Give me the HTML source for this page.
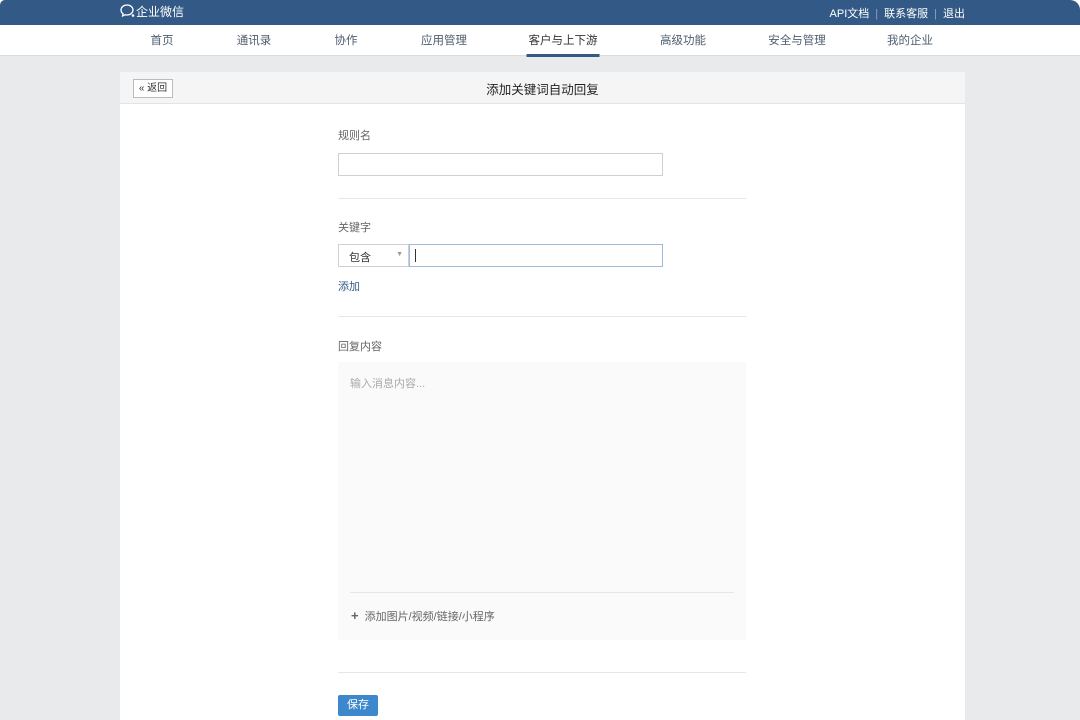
<!DOCTYPE html><html><head><meta charset="utf-8"><style>
*{margin:0;padding:0;box-sizing:border-box}
body{width:1080px;height:720px;overflow:hidden;background:#fff;font-family:"Liberation Sans","Noto Sans CJK SC",sans-serif;font-size:12px;color:#333}
.wrap{position:absolute;left:0;top:0;width:1080px;height:720px;background:#e9eaec;border-radius:5px 10px 0 0;overflow:hidden}
.top{position:absolute;left:0;top:0;width:1080px;height:25px;background:#335a86;color:#fff}
.logo{position:absolute;left:119px;top:3px;font-size:12px}
.links{position:absolute;right:115px;top:5px;font-size:11px}
.links span.s{color:#8aa3c0;margin:0 6px}
.nav{position:absolute;top:25px;left:0;width:1080px;height:31px;background:#fff;border-bottom:1px solid #dcdcdc}
.nav a{position:absolute;top:7px;font-size:11.5px;color:#4e5d6e;transform:translateX(-50%)}
.nav a.on{color:#333}
.nav a.on:after{content:"";position:absolute;left:-2px;right:-2px;top:22px;height:3px;background:#335a86}
.card{position:absolute;left:120px;top:72px;width:845px;height:660px;background:#fff}
.hd{height:32px;background:#f5f5f5;border-bottom:1px solid #e4e4e4;position:relative}
.back{position:absolute;left:13px;top:7px;width:40px;height:19px;border:1px solid #bbb;background:#fff;font-size:10px;line-height:17px;text-align:center;color:#333}
.title{position:absolute;left:0;right:0;top:7px;text-align:center;font-size:12.5px;color:#222}
.lbl{position:absolute;left:218px;color:#666;font-size:11px}
.inp{position:absolute;border:1px solid #d0d0d0;background:#fff}
.hr{position:absolute;left:218px;width:408px;height:1px;background:#e6e6e6}
</style></head><body><div class="wrap">
<div class="top"><div class="logo"><svg width="17" height="16" viewBox="0 0 17 16" style="vertical-align:-3px"><path d="M8 2C4.5 2 2 4.3 2 7c0 1.5.8 2.8 2 3.7L3.6 13l2.6-1.3c.6.2 1.2.3 1.8.3 3.5 0 6-2.3 6-5S11.5 2 8 2z" fill="none" stroke="#fff" stroke-width="1.3"/><circle cx="14" cy="12.5" r="1.3" fill="#fff"/></svg>企业微信</div>
<div class="links">API文档<span class="s">|</span>联系客服<span class="s">|</span>退出</div></div>
<div class="nav"><a style="left:162px">首页</a><a style="left:254px">通讯录</a><a style="left:346px">协作</a><a style="left:444px">应用管理</a><a class="on" style="left:563px">客户与上下游</a><a style="left:683px">高级功能</a><a style="left:797px">安全与管理</a><a style="left:910px">我的企业</a></div>
<div class="card">
<div class="hd"><div class="back">« 返回</div><div class="title">添加关键词自动回复</div></div>
<div class="lbl" style="top:55px">规则名</div>
<div class="inp" style="left:218px;top:81px;width:325px;height:23px"></div>
<div class="hr" style="top:126px"></div>
<div class="lbl" style="top:147px">关键字</div>
<div class="inp" style="left:218px;top:172px;width:71px;height:23px;font-size:11px;padding:4px 10px">包含<span style="position:absolute;right:5px;top:6px;font-size:7px;color:#999">▼</span></div>
<div class="inp" style="left:289px;top:172px;width:254px;height:23px;border-color:#9fbbd9"><div style="position:absolute;left:5px;top:4px;width:1px;height:13px;background:#333"></div></div>
<div style="position:absolute;left:218px;top:206px;font-size:11px;color:#335a86">添加</div>
<div class="hr" style="top:244px"></div>
<div class="lbl" style="top:266px">回复内容</div>
<div style="position:absolute;left:218px;top:290px;width:408px;height:278px;background:#fafafa">
<div style="position:absolute;left:12px;top:13px;color:#aaa;font-size:11px">输入消息内容...</div>
<div style="position:absolute;left:12px;right:12px;top:230px;height:1px;background:#e6e6e6"></div>
<div style="position:absolute;left:13px;top:246px;color:#666;font-size:11px"><b style="font-size:13px;margin-right:6px">+</b>添加图片/视频/链接/小程序</div></div>
<div class="hr" style="top:600px"></div>
<div style="position:absolute;left:218px;top:623px;width:40px;height:21px;background:#3d88cc;color:#fff;font-size:11px;line-height:21px;text-align:center;border-radius:2px">保存</div>
</div></div></body></html>
